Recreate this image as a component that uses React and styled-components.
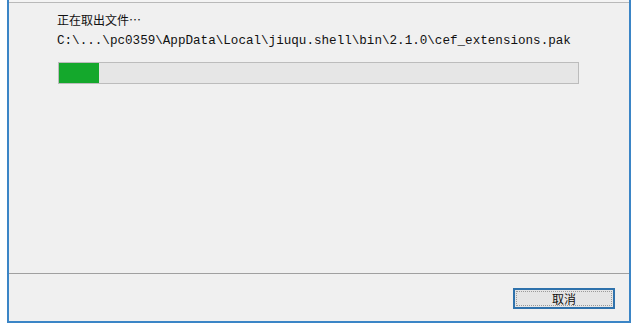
import styled, { createGlobalStyle } from "styled-components";

const GlobalStyle = createGlobalStyle`
  html, body {
    margin: 0;
    padding: 0;
    background: #ffffff;
  }
`;

const Window = styled.div`
  box-sizing: border-box;
  margin-left: 7px;
  width: 624px;
  height: 323px;
  border: 2px solid #3b85c6;
  border-top: none;
  background: #f0f0f0;
  display: flex;
  flex-direction: column;
  font-family: "Noto Sans CJK SC", "Liberation Sans", sans-serif;
  color: #111111;
`;

const TopEdge = styled.div`
  height: 2px;
  border-bottom: 1px solid #b9b9b9;
  background: #f4f4f4;
`;

const Body = styled.div`
  flex: 1;
  padding: 9px 0 0 48px;
  display: flex;
  flex-direction: column;
`;

const Title = styled.div`
  font-size: 12px;
  line-height: 16px;
`;

const PathText = styled.div`
  margin-top: 5px;
  font-family: "Liberation Mono", "DejaVu Sans Mono", monospace;
  font-size: 12.6px;
  line-height: 16px;
  white-space: nowrap;
`;

const Track = styled.div`
  box-sizing: border-box;
  margin-top: 13px;
  margin-left: 1px;
  width: 521px;
  height: 22px;
  border: 1px solid #bcbcbc;
  background: #e6e6e6;
`;

const Fill = styled.div`
  height: 100%;
  background: #14a82c;
`;

const Footer = styled.div`
  height: 48px;
  border-top: 1px solid #a0a0a0;
  display: flex;
  justify-content: flex-end;
  align-items: flex-start;
  padding: 14px 14px 0 0;
  box-sizing: border-box;
`;

const Button = styled.button`
  box-sizing: border-box;
  width: 102px;
  height: 21px;
  border: 2px solid #2f72ac;
  background: #e5e5e5;
  padding: 0;
  font-family: "Noto Sans CJK SC", sans-serif;
  font-size: 12px;
  color: #111111;
  display: flex;
  align-items: center;
  justify-content: center;
  outline: 1px dotted #9a9a9a;
  outline-offset: -4px;
`;

export default function App() {
  const fillPx = 40;
  return (
    <>
      <GlobalStyle />
      <Window>
        <TopEdge />
        <Body>
          <Title>正在取出文件…</Title>
          <PathText>
            C:\...\pc0359\AppData\Local\jiuqu.shell\bin\2.1.0\cef_extensions.pak
          </PathText>
          <Track>
            <Fill style={{ width: `${fillPx}px` }} />
          </Track>
        </Body>
        <Footer>
          <Button>取消</Button>
        </Footer>
      </Window>
    </>
  );
}
